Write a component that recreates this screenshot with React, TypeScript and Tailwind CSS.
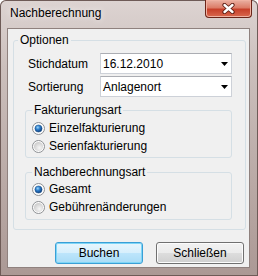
import React from "react";

const font = { fontFamily: '"Liberation Sans", Arial, sans-serif' };

function Radio({ checked, id }: { checked: boolean; id: string }) {
  return (
    <svg width="13" height="13" viewBox="0 0 13 13" className="shrink-0">
      <defs>
        <radialGradient id={`off-${id}`} cx="60%" cy="65%" r="60%">
          <stop offset="0%" stopColor="#f6f6f6" />
          <stop offset="100%" stopColor="#cfcfcf" />
        </radialGradient>
        <radialGradient id={`on-${id}`} cx="40%" cy="35%" r="65%">
          <stop offset="0%" stopColor="#9cd6f8" />
          <stop offset="45%" stopColor="#2f7fcc" />
          <stop offset="100%" stopColor="#0d3f7e" />
        </radialGradient>
      </defs>
      <circle cx="6.5" cy="6.5" r="6" fill="#fdfdfd" stroke="#8e9194" strokeWidth="1" />
      {checked ? (
        <circle cx="6.5" cy="6.5" r="3.6" fill={`url(#on-${id})`} stroke="#1d4f85" strokeWidth="0.5" />
      ) : (
        <circle cx="6.5" cy="6.5" r="4.6" fill={`url(#off-${id})`} />
      )}
    </svg>
  );
}

function Combo({ value }: { value: string }) {
  return (
    <div className="flex h-[21px] flex-1 items-center border border-[#cdd1d8] border-t-[#abadb3] bg-white pl-[2px]">
      <span className="flex-1 leading-[14px]">{value}</span>
      <div className="flex h-full w-[17px] items-center justify-end pr-[3px]">
        <svg width="7" height="4" viewBox="0 0 7 4">
          <polygon points="0,0 7,0 3.5,4" fill="#000" />
        </svg>
      </div>
    </div>
  );
}

function RadioRow({ label, checked, id }: { label: string; checked: boolean; id: string }) {
  return (
    <div className="flex h-[18px] items-center gap-[4px]">
      <Radio checked={checked} id={id} />
      <span className="leading-[14px]">{label}</span>
    </div>
  );
}

export default function App() {
  return (
    <div
      className="flex h-[276px] w-[258px] flex-col rounded-t-[6px] bg-[linear-gradient(to_bottom,#ddd4d2_0%,#cbbfbc_25%,#baaaa6_65%,#ab9995_100%)] text-[12px] text-black shadow-[inset_0_0_0_1px_#6e5b57]"
      style={font}
    >
      {/* Title bar */}
      <div className="flex h-[28px] shrink-0 items-start">
        <span className="pl-[10px] pt-[6px] leading-[14px] [text-shadow:0_0_6px_#ffffff]">Nachberechnung</span>
        <div className="ml-auto mr-[6px] flex h-[18px] w-[47px] items-center justify-center rounded-b-[4px] border border-t-0 border-[#6b2418] bg-[linear-gradient(to_bottom,#eab1a3_0%,#dc7d68_45%,#c7402a_55%,#d9694f_100%)] shadow-[inset_0_0_0_1px_#f0b2a2]">
          <svg width="13" height="11" viewBox="0 0 13 11">
            <path d="M2.5 2 L10.5 9 M10.5 2 L2.5 9" stroke="#5a1c12" strokeWidth="4.2" strokeLinecap="round" />
            <path d="M2.5 2 L10.5 9 M10.5 2 L2.5 9" stroke="#ffffff" strokeWidth="2.4" strokeLinecap="round" />
          </svg>
        </div>
      </div>

      {/* Client area */}
      <div className="ml-[7px] flex h-[240px] w-[243px] flex-col border border-[#8f817e] bg-[#f0f0f0]">
        <fieldset className="ml-[5px] mt-[4px] w-[233px] rounded-[3px] border border-[#d5dfe5]">
          <legend className="ml-[4px] px-[2px] leading-[14px]">Optionen</legend>
          <div className="flex flex-col pb-[9px] pl-[11px] pr-[13px] pt-[6px]">
            <div className="flex h-[21px] items-center">
              <span className="w-[75px] pl-[3px] leading-[14px]">Stichdatum</span>
              <Combo value="16.12.2010" />
            </div>
            <div className="mt-[2px] flex h-[21px] items-center">
              <span className="w-[75px] pl-[3px] leading-[14px]">Sortierung</span>
              <Combo value="Anlagenort" />
            </div>

            <fieldset className="mt-[6px] rounded-[3px] border border-[#d5dfe5]">
              <legend className="ml-[6px] px-[2px] leading-[14px]">Fakturierungsart</legend>
              <div className="flex flex-col pb-[2px] pl-[6px] pt-[2px]">
                <RadioRow label="Einzelfakturierung" checked id="a" />
                <RadioRow label="Serienfakturierung" checked={false} id="b" />
              </div>
            </fieldset>

            <fieldset className="mt-[7px] rounded-[3px] border border-[#d5dfe5]">
              <legend className="ml-[6px] px-[2px] leading-[14px]">Nachberechnungsart</legend>
              <div className="flex flex-col pb-[3px] pl-[6px] pt-[1px]">
                <RadioRow label="Gesamt" checked id="c" />
                <RadioRow label="Gebührenänderungen" checked={false} id="d" />
              </div>
            </fieldset>
          </div>
        </fieldset>

        <div className="mt-[12px] flex justify-end gap-[13px] pr-[5px]">
          <button className="flex h-[22px] w-[88px] items-center justify-center rounded-[3px] border border-[#3a9fd6] bg-[linear-gradient(to_bottom,#e8f6fd_0%,#d6effc_50%,#bde5fb_50%,#a9dcf6_100%)] leading-[14px] shadow-[inset_0_0_0_1px_#7fd6f7]">
            Buchen
          </button>
          <button className="flex h-[22px] w-[88px] items-center justify-center rounded-[3px] border border-[#707070] bg-[linear-gradient(to_bottom,#f2f2f2_0%,#ebebeb_50%,#dddddd_50%,#cfcfcf_100%)] leading-[14px] shadow-[inset_0_0_0_1px_#fcfcfc]">
            Schließen
          </button>
        </div>
      </div>
    </div>
  );
}
